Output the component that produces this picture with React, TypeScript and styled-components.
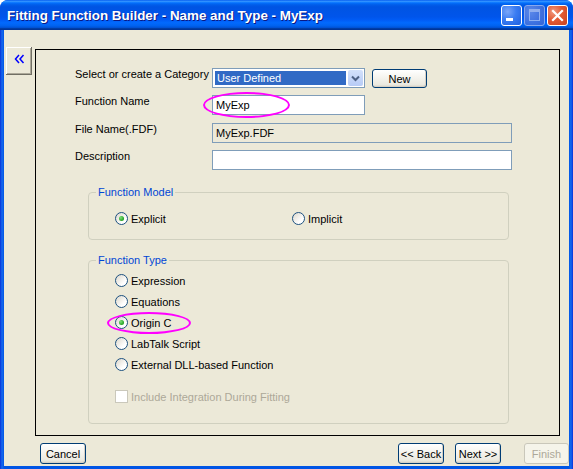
import React from 'react';
import styled, {createGlobalStyle} from 'styled-components';

const GlobalStyle = createGlobalStyle`
    html, body {
        margin: 0;
        padding: 0;
        background: #fff;
    }

    body {
        font-family: "Liberation Sans", Arial, sans-serif;
        font-size: 11px;
        color: #000;
    }
`;

const WindowElement = styled.div`
    width: 573px;
    height: 469px;
    box-sizing: border-box;
    display: flex;
    flex-direction: column;
    background: linear-gradient(to right, #0831d9 0, #166aee 2px, #0055e5 4px, #0055e5 569px, #166aee 571px, #0831d9 573px);
    border-radius: 8px 8px 0 0;
    overflow: hidden;
`;

const TitleBarElement = styled.div`
    height: 30px;
    flex: none;
    display: flex;
    align-items: center;
    padding: 0 5px 0 7px;
    background: linear-gradient(
        to bottom,
        #0058ee 0%,
        #3593ff 4%,
        #288eff 6%,
        #127dff 8%,
        #036ffc 10%,
        #0262ee 14%,
        #0057e5 20%,
        #0054e3 24%,
        #0055eb 56%,
        #005bf5 66%,
        #026afe 76%,
        #0062ef 86%,
        #0052d6 92%,
        #0040ab 94%,
        #003092 100%
    );
`;

const TitleElement = styled.div`
    flex: 1;
    color: #fff;
    font-weight: bold;
    font-size: 13.4px;
    padding-top: 1px;
    white-space: nowrap;
    text-shadow: 1px 1px #0a1883;
`;

const CaptionButtonElement = styled.div<{$kind: 'min' | 'max' | 'close'}>`
    width: 21px;
    height: 21px;
    box-sizing: border-box;
    margin-left: 2px;
    border: 1px solid #fff;
    border-radius: 3px;
    display: flex;
    align-items: center;
    justify-content: center;
    background: ${(properties) =>
        properties.$kind === 'close'
            ? 'radial-gradient(circle at 30% 30%, #f09a80 0%, #e35a33 45%, #c8421f 100%)'
            : properties.$kind === 'max'
            ? 'radial-gradient(circle at 30% 30%, #6b93ea 0%, #4a75dc 60%, #3e66d0 100%)'
            : 'radial-gradient(circle at 30% 30%, #7ba6f8 0%, #3a7cf2 45%, #1e5fdf 100%)'};
    opacity: ${(properties) => (properties.$kind === 'max' ? 0.85 : 1)};
    ${(properties) => properties.$kind === 'max' && 'border-color: #9fb7ee;'}
`;

const ClientElement = styled.div`
    flex: 1;
    margin: 0 4px 3px;
    background: #ece9d8;
    display: flex;
    flex-direction: column;
`;

const BodyElement = styled.div`
    display: flex;
    align-items: flex-start;
    padding: 17px 0 0 2px;
`;

const CollapseButtonElement = styled.button`
    appearance: none;
    width: 26px;
    height: 28px;
    padding: 0 0 4px;
    border: 0;
    background: #ece9d8;
    box-shadow: inset -1px -1px #716f64, inset 1px 1px #fff, inset -2px -2px #aca899;
    display: flex;
    align-items: center;
    justify-content: center;
`;

const PanelElement = styled.div`
    margin: 2px 0 0 3px;
    width: 525px;
    height: 387px;
    box-sizing: border-box;
    border: 1px solid #000;
    padding: 18px 0 0 39px;
`;

const FormElement = styled.div`
    display: grid;
    grid-template-columns: 137px auto;
    row-gap: 7px;
    align-items: start;
`;

const LabelElement = styled.div<{$offset?: number}>`
    line-height: 13px;
    white-space: nowrap;
    margin-top: ${(properties) => properties.$offset || 0}px;
`;

const FieldRowElement = styled.div<{$offset?: number}>`
    display: flex;
    align-items: flex-start;
    position: relative;
    margin-top: ${(properties) => properties.$offset || 0}px;
`;

const TextFieldElement = styled.div<{$width: number; $readOnly?: boolean}>`
    width: ${(properties) => properties.$width}px;
    height: 20px;
    box-sizing: border-box;
    border: 1px solid #7f9db9;
    background: ${(properties) => (properties.$readOnly ? '#ece9d8' : '#fff')};
    padding: 0 3px;
    line-height: 18px;
    white-space: nowrap;
`;

const ComboElement = styled.div`
    width: 153px;
    height: 20px;
    box-sizing: border-box;
    border: 1px solid #7f9db9;
    background: #fff;
    padding: 2px;
    display: flex;
    gap: 2px;
`;

const ComboValueElement = styled.div`
    flex: 1;
    background: #316ac5;
    color: #fff;
    padding: 0 2px;
    line-height: 14px;
    white-space: nowrap;
`;

const ComboArrowElement = styled.div`
    width: 15px;
    margin: -1px -1px -1px 0;
    border-radius: 2px;
    background: linear-gradient(to bottom, #d3e1fb, #b7cbf6);
    display: flex;
    align-items: center;
    justify-content: center;
`;

const PushButtonElement = styled.button<{$width: number; $height?: number; $disabled?: boolean}>`
    appearance: none;
    width: ${(properties) => properties.$width}px;
    height: ${(properties) => properties.$height || 21}px;
    box-sizing: border-box;
    padding: 0;
    font-family: inherit;
    font-size: 11px;
    border-radius: 3px;
    border: 1px solid ${(properties) => (properties.$disabled ? '#c9c7ba' : '#003c74')};
    color: ${(properties) => (properties.$disabled ? '#aca899' : '#000')};
    background: ${(properties) =>
        properties.$disabled
            ? '#f5f4ea'
            : 'linear-gradient(to bottom, #fff 0%, #f6f5f0 40%, #ebe9e0 85%, #d8d4c6 100%)'};
    box-shadow: ${(properties) => (properties.$disabled ? 'none' : 'inset -1px -1px #d6d0c5')};
`;

const NewButtonElement = styled(PushButtonElement)`
    margin: 1px 0 0 7px;
`;

const HighlightElement = styled.div<{$left: number; $top: number; $width: number; $height: number}>`
    position: absolute;
    left: ${(properties) => properties.$left}px;
    top: ${(properties) => properties.$top}px;
    width: ${(properties) => properties.$width}px;
    height: ${(properties) => properties.$height}px;
    box-sizing: border-box;
    border: 2px solid #f0f;
    border-radius: 50%;
    pointer-events: none;
`;

const GroupElement = styled.fieldset<{$top: number; $bottom: number}>`
    margin: ${(properties) => properties.$top}px 0 0 13px;
    width: 421px;
    box-sizing: border-box;
    border: 1px solid #d0d0bf;
    border-radius: 4px;
    padding: 0 0 ${(properties) => properties.$bottom}px 7px;
    min-inline-size: 0;
`;

const LegendElement = styled.legend`
    color: #0046d5;
    padding: 0 2px;
    line-height: 13px;
    font-size: 11px;
`;

const ModelOptionsElement = styled.div`
    display: grid;
    grid-template-columns: 177px auto;
    padding: 13px 0 0 19px;
`;

const TypeOptionsElement = styled.div`
    display: flex;
    flex-direction: column;
    padding: 3px 0 0 19px;
`;

const OptionElement = styled.div<{$height?: number; $gap?: number}>`
    height: ${(properties) => properties.$height || 13}px;
    margin-top: ${(properties) => properties.$gap || 0}px;
    display: flex;
    align-items: center;
    gap: 3px;
    position: relative;
    white-space: nowrap;
`;

const RadioElement = styled.span<{$checked?: boolean}>`
    width: 13px;
    height: 13px;
    box-sizing: border-box;
    border: 1px solid #1c5180;
    border-radius: 50%;
    background: linear-gradient(135deg, #dcd7cb 0%, #fff 70%);
    display: flex;
    align-items: center;
    justify-content: center;
    flex: none;

    &::after {
        content: '';
        display: ${(properties) => (properties.$checked ? 'block' : 'none')};
        width: 5px;
        height: 5px;
        border-radius: 50%;
        background: radial-gradient(circle at 35% 35%, #7fe07a 0%, #21a121 70%, #1b861b 100%);
    }
`;

const CheckboxElement = styled.span`
    width: 13px;
    height: 13px;
    box-sizing: border-box;
    border: 1px solid #cac8bb;
    background: #fff;
    flex: none;
`;

const DisabledTextElement = styled.span`
    color: #aca899;
`;

const FooterElement = styled.div`
    display: flex;
    align-items: center;
    padding: 7px 0 0 36px;
`;

const SpacerElement = styled.div`
    flex: 1;
`;

const Radio = ({label, checked}: {label: string; checked?: boolean}) => (
    <>
        <RadioElement $checked={checked} />
        <span>{label}</span>
    </>
);

const App = () => (
    <>
        <GlobalStyle />
        <WindowElement>
            <TitleBarElement>
                <TitleElement>Fitting Function Builder - Name and Type - MyExp</TitleElement>
                <CaptionButtonElement $kind='min'>
                    <svg width='19' height='19' viewBox='0 0 19 19'>
                        <rect x='4' y='12' width='7' height='3' fill='#fff' />
                    </svg>
                </CaptionButtonElement>
                <CaptionButtonElement $kind='max'>
                    <svg width='19' height='19' viewBox='0 0 19 19'>
                        <rect x='4.5' y='3.5' width='10' height='11' fill='none' stroke='#a9bff0' />
                        <rect x='4' y='3' width='11' height='3' fill='#a9bff0' />
                    </svg>
                </CaptionButtonElement>
                <CaptionButtonElement $kind='close'>
                    <svg width='19' height='19' viewBox='0 0 19 19'>
                        <path d='M5 5 L14 14 M14 5 L5 14' stroke='#fff' strokeWidth='2.2' strokeLinecap='square' />
                    </svg>
                </CaptionButtonElement>
            </TitleBarElement>
            <ClientElement>
                <BodyElement>
                    <CollapseButtonElement type='button' aria-label='Collapse'>
                        <svg width='11' height='10' viewBox='0 0 11 10'>
                            <path d='M5 1 L1.5 5 L5 9 M9.5 1 L6 5 L9.5 9' fill='none' stroke='#0000ff' strokeWidth='1.5' />
                        </svg>
                    </CollapseButtonElement>
                    <PanelElement>
                        <FormElement>
                            <LabelElement>Select or create a Category</LabelElement>
                            <FieldRowElement>
                                <ComboElement>
                                    <ComboValueElement>User Defined</ComboValueElement>
                                    <ComboArrowElement>
                                        <svg width='9' height='7' viewBox='0 0 9 7'>
                                            <path d='M1 1.5 L4.5 5 L8 1.5' fill='none' stroke='#4d6185' strokeWidth='2' />
                                        </svg>
                                    </ComboArrowElement>
                                </ComboElement>
                                <NewButtonElement type='button' $width={55} $height={19}>
                                    New
                                </NewButtonElement>
                            </FieldRowElement>
                            <LabelElement>Function Name</LabelElement>
                            <FieldRowElement>
                                <TextFieldElement $width={153}>MyExp</TextFieldElement>
                                <HighlightElement $left={-9} $top={-3} $width={87} $height={26} />
                            </FieldRowElement>
                            <LabelElement $offset={1}>File Name(.FDF)</LabelElement>
                            <FieldRowElement $offset={1}>
                                <TextFieldElement $width={300} $readOnly>
                                    MyExp.FDF
                                </TextFieldElement>
                            </FieldRowElement>
                            <LabelElement>Description</LabelElement>
                            <FieldRowElement>
                                <TextFieldElement $width={300} />
                            </FieldRowElement>
                        </FormElement>

                        <GroupElement $top={16} $bottom={14}>
                            <LegendElement>Function Model</LegendElement>
                            <ModelOptionsElement>
                                <OptionElement>
                                    <Radio label='Explicit' checked />
                                </OptionElement>
                                <OptionElement>
                                    <Radio label='Implicit' />
                                </OptionElement>
                            </ModelOptionsElement>
                        </GroupElement>

                        <GroupElement $top={14} $bottom={16}>
                            <LegendElement>Function Type</LegendElement>
                            <TypeOptionsElement>
                                <OptionElement $height={21}>
                                    <Radio label='Expression' />
                                </OptionElement>
                                <OptionElement $height={21}>
                                    <Radio label='Equations' />
                                </OptionElement>
                                <OptionElement $height={21}>
                                    <Radio label='Origin C' checked />
                                    <HighlightElement $left={-8} $top={0} $width={84} $height={22} />
                                </OptionElement>
                                <OptionElement $height={21}>
                                    <Radio label='LabTalk Script' />
                                </OptionElement>
                                <OptionElement $height={21}>
                                    <Radio label='External DLL-based Function' />
                                </OptionElement>
                                <OptionElement $height={21} $gap={11}>
                                    <CheckboxElement />
                                    <DisabledTextElement>Include Integration During Fitting</DisabledTextElement>
                                </OptionElement>
                            </TypeOptionsElement>
                        </GroupElement>
                    </PanelElement>
                </BodyElement>
                <FooterElement>
                    <PushButtonElement type='button' $width={46}>
                        Cancel
                    </PushButtonElement>
                    <SpacerElement />
                    <PushButtonElement type='button' $width={46}>
                        {'<< Back'}
                    </PushButtonElement>
                    <PushButtonElement type='button' $width={46} style={{marginLeft: 11}}>
                        {'Next >>'}
                    </PushButtonElement>
                    <PushButtonElement type='button' $width={45} $disabled style={{marginLeft: 23}}>
                        Finish
                    </PushButtonElement>
                </FooterElement>
            </ClientElement>
        </WindowElement>
    </>
);

export default App;
